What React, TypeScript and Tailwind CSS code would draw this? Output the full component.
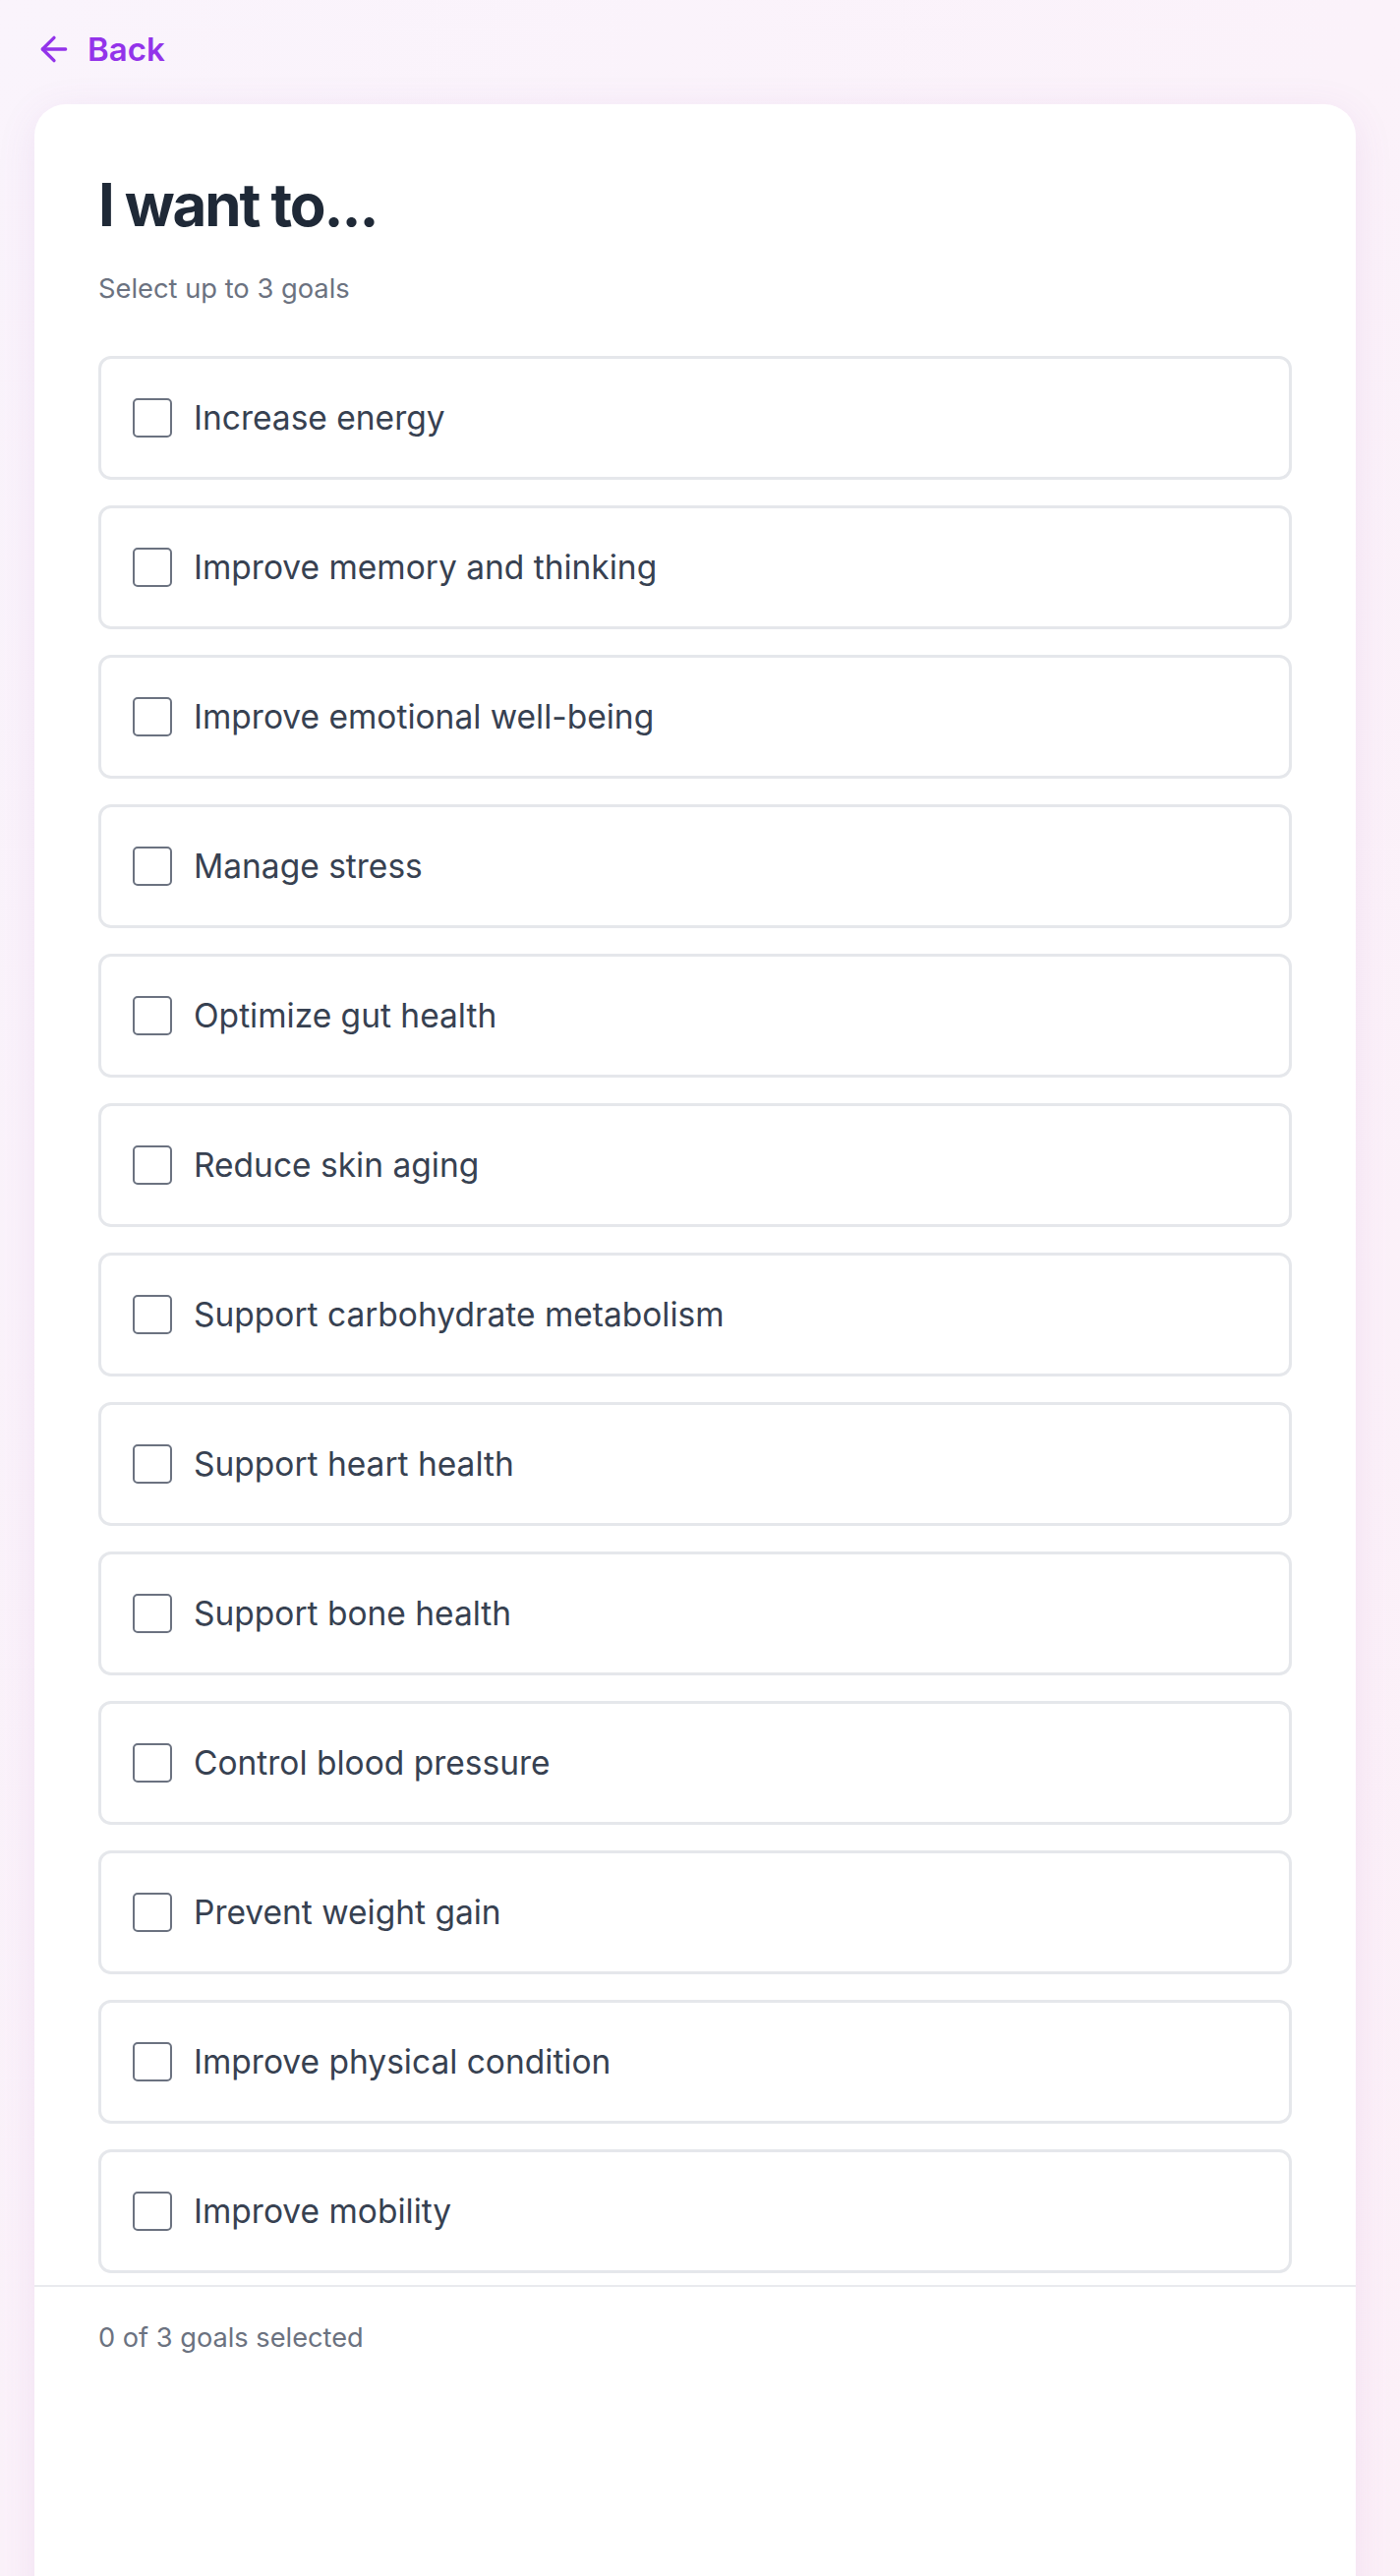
import React from 'react';
import { ArrowLeft } from 'lucide-react';

const goals = [
  'Increase energy',
  'Improve memory and thinking',
  'Improve emotional well-being',
  'Manage stress',
  'Optimize gut health',
  'Reduce skin aging',
  'Support carbohydrate metabolism',
  'Support heart health',
  'Support bone health',
  'Control blood pressure',
  'Prevent weight gain',
  'Improve physical condition',
  'Improve mobility',
];

const GoalRow = ({ label }: { label: string }) => (
  <label className="flex h-[126px] cursor-pointer items-center gap-[22px] rounded-[13px] border-[3px] border-[#e5e7eb] bg-white px-[32px]">
    <span className="h-[40px] w-[40px] shrink-0 rounded-[5px] border-2 border-[#6b7280] bg-white" />
    <span className="text-[33.5px] leading-[46px] text-[#374151]">{label}</span>
  </label>
);

export default function App() {
  const selected = 0;

  return (
    <div className="flex h-[2620px] flex-col overflow-hidden bg-gradient-to-br from-[#faf4fc] to-[#fcf0f8] pl-[35px] pr-[45px] font-['Inter',sans-serif]">
      {/* Back link */}
      <div className="pt-[30px]">
        <button className="flex items-center gap-[14px] text-[#9333ea]">
          <ArrowLeft size={40} strokeWidth={2} />
          <span className="text-[33px] font-semibold leading-[40px]">Back</span>
        </button>
      </div>

      {/* Goals card */}
      <div className="mt-[36px] -mb-[40px] flex flex-1 flex-col rounded-t-[32px] bg-white shadow-[0_8px_40px_rgba(150,70,170,0.10)]">
        <div className="px-[65px] pt-[72px] pb-[12px]">
          <h1 className="text-[60px] font-bold leading-none tracking-[-0.035em] text-[#1f2937]">I want to...</h1>
          <p className="mt-[36px] text-[27.3px] leading-[40px] text-[#6b7280]">Select up to 3 goals</p>

          <div className="mt-[48px] flex flex-col gap-[26px]">
            {goals.map((g) => (
              <GoalRow key={g} label={g} />
            ))}
          </div>
        </div>

        <div className="border-t-2 border-[#e9eaee] px-[65px] pt-[32px]">
          <p className="text-[27.2px] leading-[40px] text-[#6b7280]">{selected} of 3 goals selected</p>
        </div>
      </div>
    </div>
  );
}
